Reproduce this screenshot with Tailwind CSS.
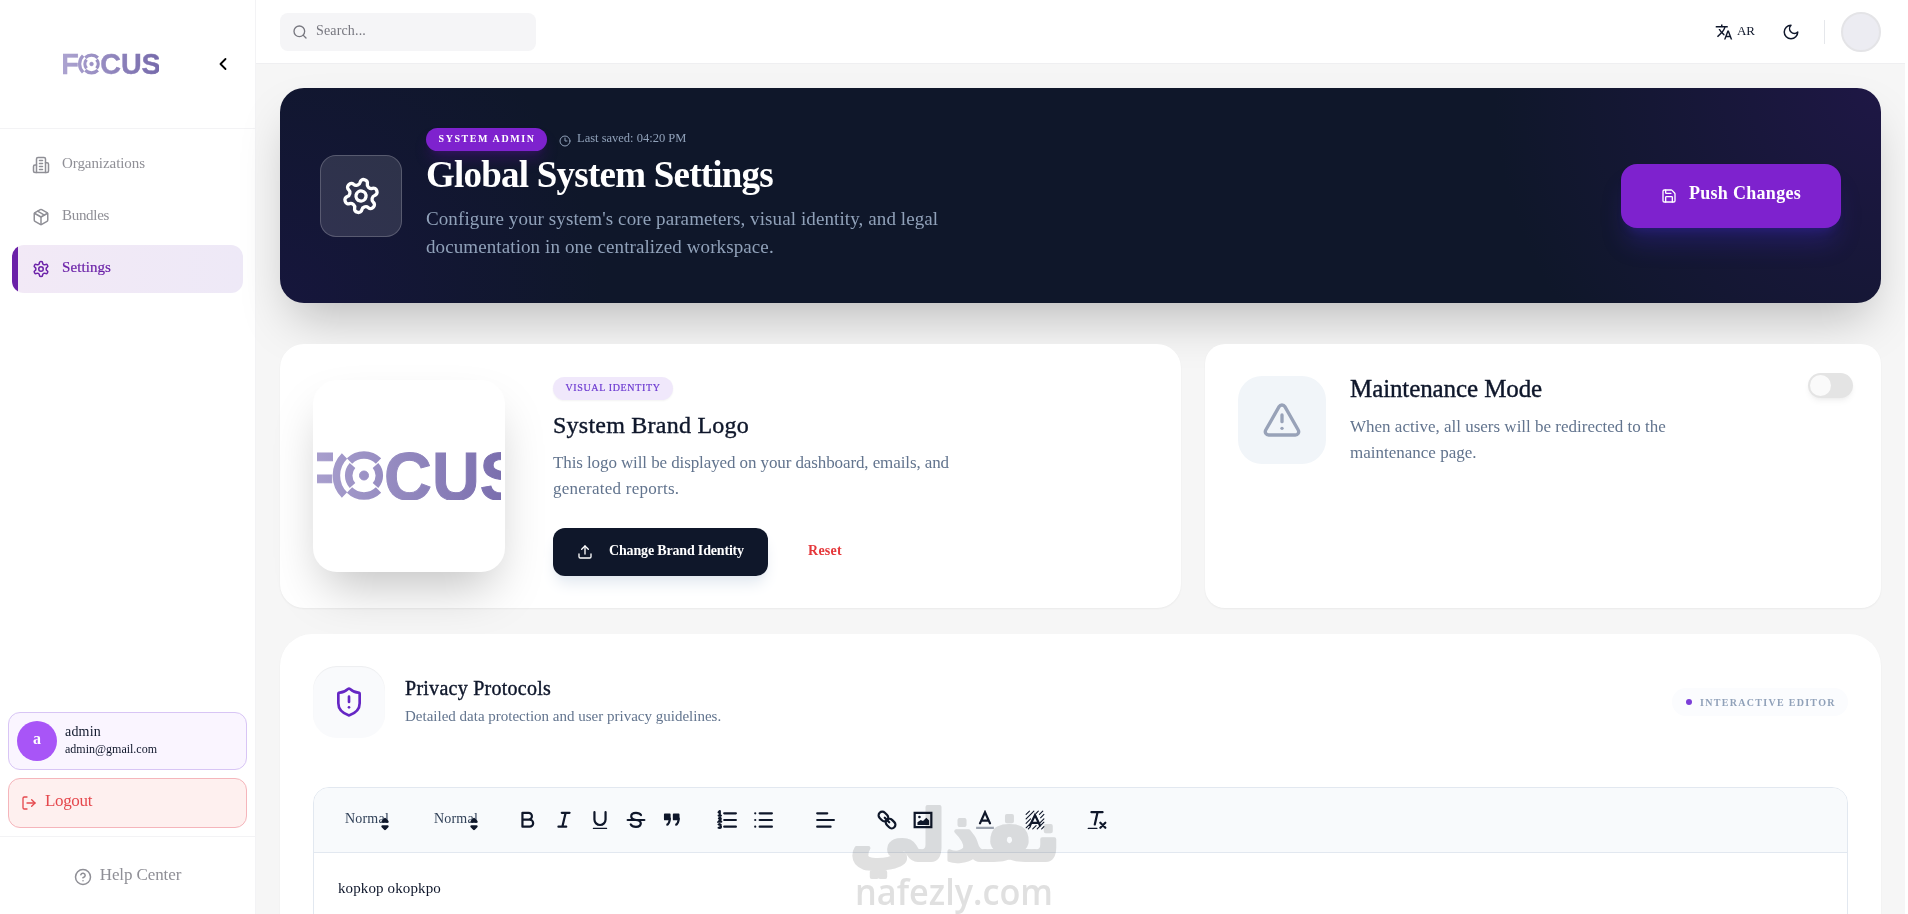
<!DOCTYPE html>
<html lang="en">
<head>
    <meta charset="UTF-8">
    <meta name="viewport" content="width=device-width, initial-scale=1.0">
    <title>Global System Settings</title>
    <script src="https://cdn.jsdelivr.net/npm/@tailwindcss/browser@4"></script>
</head>
<body class="bg-white font-['Liberation_Serif',serif] text-slate-900 h-screen overflow-hidden">
    <!-- shared logo -->
    <svg class="absolute size-0">
        <defs>
            <linearGradient id="logo-fill" gradientUnits="userSpaceOnUse" x1="0" y1="0" x2="222" y2="0">
                <stop offset="0" stop-color="#aca3d0"/>
                <stop offset="1" stop-color="#766aab"/>
            </linearGradient>
            <symbol id="logo" viewBox="0 0 222 49">
                <g fill="url(#logo-fill)" stroke="url(#logo-fill)" font-family="Liberation Sans, sans-serif" font-weight="700" font-size="68">
                    <text x="-5" y="48.5" textLength="42" lengthAdjust="spacingAndGlyphs">F</text>
                    <text x="86" y="48.5" textLength="140" lengthAdjust="spacingAndGlyphs">CUS</text>
                    <circle cx="66" cy="24.5" r="4.5"/>
                </g>
                <g fill="none" stroke="url(#logo-fill)" stroke-width="7.5">
                    <path d="M46.500 5a27.500 27.500 0 0 0 0 39"/>
                    <path d="M51.500 10a20.500 20.500 0 0 1 29 0M51.500 39a20.500 20.500 0 0 0 29 0"/>
                    <path d="M54.500 14.500a15 15 0 0 0 0 20M77.500 14.500a15 15 0 0 1 0 20"/>
                </g>
            </symbol>
        </defs>
    </svg>

    <div class="flex h-full w-[1905px] bg-[#f6f6f6]">
        <!-- Sidebar -->
        <aside class="w-64 shrink-0 bg-white border-r border-[#f3f3f5] flex flex-col">
            <div class="h-[129px] border-b border-[#f3f3f5] flex items-center justify-between pl-[63px] pr-[22px]">
                <svg class="w-[96px] h-[22px]"><use href="#logo"/></svg>
                <svg class="size-5 text-black" viewBox="0 0 24 24" fill="none" stroke="currentColor" stroke-width="2.2" stroke-linecap="round" stroke-linejoin="round"><path d="m15 18-6-6 6-6"/></svg>
            </div>
            <nav class="flex flex-col gap-1 px-3 pt-3 text-[15px] text-[#8f8f96]">
                <a href="#" class="h-12 flex items-center gap-3 pl-5">
                    <svg class="size-[18px]" viewBox="0 0 24 24" fill="none" stroke="currentColor" stroke-width="2" stroke-linecap="round" stroke-linejoin="round"><path d="M6 22V4a2 2 0 0 1 2-2h8a2 2 0 0 1 2 2v18Z"/><path d="M6 12H4a2 2 0 0 0-2 2v6a2 2 0 0 0 2 2h2"/><path d="M18 9h2a2 2 0 0 1 2 2v9a2 2 0 0 1-2 2h-2"/><path d="M10 6h4M10 10h4M10 14h4M10 18h4"/></svg>
                    <span class="pb-1 tracking-[-0.07px]">Organizations</span>
                </a>
                <a href="#" class="h-12 flex items-center gap-3 pl-5">
                    <svg class="size-[18px]" viewBox="0 0 24 24" fill="none" stroke="currentColor" stroke-width="2" stroke-linecap="round" stroke-linejoin="round"><path d="M11 21.730a2 2 0 0 0 2 0l7-4A2 2 0 0 0 21 16V8a2 2 0 0 0-1-1.730l-7-4a2 2 0 0 0-2 0l-7 4A2 2 0 0 0 3 8v8a2 2 0 0 0 1 1.730z"/><path d="M12 22V12"/><path d="m3.300 7 8.700 5 8.700-5"/><path d="m7.500 4.270 9 5.150"/></svg>
                    <span class="pb-1 tracking-[-0.3px]">Bundles</span>
                </a>
                <a href="#" class="h-12 flex items-center gap-3 rounded-xl overflow-hidden bg-linear-to-r from-[#f2e9f6] to-[#eee9f7] text-[#6b21a8]">
                    <span class="w-1.5 h-full bg-[#6b21a8] -mr-3"></span>
                    <svg class="ml-[14px] size-[18px]" viewBox="0 0 24 24" fill="none" stroke="currentColor" stroke-width="2" stroke-linecap="round" stroke-linejoin="round"><path d="M12.220 2h-.440a2 2 0 0 0-2 2v.180a2 2 0 0 1-1 1.730l-.430.250a2 2 0 0 1-2 0l-.150-.080a2 2 0 0 0-2.730.730l-.220.380a2 2 0 0 0 .730 2.730l.150.100a2 2 0 0 1 1 1.720v.510a2 2 0 0 1-1 1.740l-.150.090a2 2 0 0 0-.730 2.730l.220.380a2 2 0 0 0 2.730.730l.150-.080a2 2 0 0 1 2 0l.430.250a2 2 0 0 1 1 1.730V20a2 2 0 0 0 2 2h.440a2 2 0 0 0 2-2v-.180a2 2 0 0 1 1-1.730l.430-.250a2 2 0 0 1 2 0l.150.080a2 2 0 0 0 2.730-.730l.220-.390a2 2 0 0 0-.730-2.730l-.150-.080a2 2 0 0 1-1-1.740v-.500a2 2 0 0 1 1-1.740l.150-.090a2 2 0 0 0 .730-2.730l-.220-.380a2 2 0 0 0-2.730-.730l-.150.080a2 2 0 0 1-2 0l-.430-.250a2 2 0 0 1-1-1.730V4a2 2 0 0 0-2-2z"/><circle cx="12" cy="12" r="3"/></svg>
                    <span class="pb-1 tracking-[0.08px] [-webkit-text-stroke:0.2px]">Settings</span>
                </a>
            </nav>
            <div class="mt-auto px-2 flex flex-col gap-2">
                <div class="h-[58px] rounded-xl border border-[#d8c5f5] bg-[#faf5ff] flex items-center gap-2 pl-2">
                    <div class="size-10 rounded-full bg-[#a855f7] text-white font-bold flex items-center justify-center pb-1">a</div>
                    <div class="flex flex-col pb-0.5">
                        <span class="text-[14px] leading-[18px] tracking-[0.2px]">admin</span>
                        <span class="text-[12px] leading-[16px]">admin@gmail.com</span>
                    </div>
                </div>
                <div class="h-[50px] rounded-xl border border-[#f5b5bb] bg-[#fef0ef] text-[#e5484d] flex items-center gap-2 pl-3">
                    <svg class="size-4" viewBox="0 0 24 24" fill="none" stroke="currentColor" stroke-width="2" stroke-linecap="round" stroke-linejoin="round"><path d="M9 21H5a2 2 0 0 1-2-2V5a2 2 0 0 1 2-2h4"/><path d="m16 17 5-5-5-5"/><path d="M21 12H9"/></svg>
                    <span class="text-[17px] pb-1 tracking-[-0.35px]">Logout</span>
                </div>
            </div>
            <div class="mt-2 h-[78px] border-t border-[#f3f3f5] flex items-center justify-center gap-2 text-[#8f8f96]">
                <svg class="size-[18px] mt-0.5" viewBox="0 0 24 24" fill="none" stroke="currentColor" stroke-width="2" stroke-linecap="round" stroke-linejoin="round"><circle cx="12" cy="12" r="10"/><path d="M9.090 9a3 3 0 0 1 5.830 1c0 2-3 3-3 3"/><path d="M12 17h.010"/></svg>
                <span class="text-[17px] pb-0.5 tracking-[-0.1px]">Help Center</span>
            </div>
        </aside>

        <div class="flex-1 flex flex-col min-w-0">
            <!-- Top bar -->
            <header class="h-16 shrink-0 bg-white border-b border-[#efeff1] flex items-center justify-between px-6">
                <div class="w-64 h-[38px] rounded-lg bg-[#f5f5f7] flex items-center gap-2 pl-3 text-[#77777f]">
                    <svg class="size-4" viewBox="0 0 24 24" fill="none" stroke="currentColor" stroke-width="2" stroke-linecap="round" stroke-linejoin="round"><circle cx="11" cy="11" r="8"/><path d="m21 21-4.300-4.300"/></svg>
                    <span class="text-[14px] pb-0.5 tracking-[0.15px]">Search...</span>
                </div>
                <div class="flex items-center">
                    <svg class="size-[18px]" viewBox="0 0 24 24" fill="currentColor"><path d="m12.870 15.070-2.540-2.510.030-.030A17.520 17.520 0 0 0 14.070 6H17V4h-7V2H8v2H1v1.990h11.170C11.500 7.920 10.440 9.750 9 11.350 8.070 10.320 7.300 9.190 6.690 8h-2c.730 1.630 1.730 3.170 2.980 4.560l-5.090 5.020L4 19l5-5 3.110 3.110.760-2.040zM18.500 10h-2L12 22h2l1.120-3h4.750L21 22h2l-4.500-12zm-2.620 7 1.620-4.330L19.120 17h-3.240z"/></svg>
                    <span class="ml-1 text-[13px] pb-0.5">AR</span>
                    <svg class="ml-[27px] size-[18px]" viewBox="0 0 24 24" fill="none" stroke="currentColor" stroke-width="2" stroke-linecap="round" stroke-linejoin="round"><path d="M12 3a6 6 0 0 0 9 9 9 9 0 1 1-9-9Z"/></svg>
                    <div class="ml-6 w-px h-6 bg-gray-200"></div>
                    <div class="ml-4 size-10 rounded-full border-2 border-[#e4e4e7] bg-[#ececf2]"></div>
                </div>
            </header>

            <main class="px-6 pt-6 flex flex-col">
                <!-- Hero -->
                <section class="h-[215px] shrink-0 rounded-3xl bg-[#0f172a] bg-[radial-gradient(circle_at_100%_0%,#1e1745_0%,transparent_24%),radial-gradient(circle_at_0%_100%,#16163c_0%,transparent_20%)] shadow-2xl flex items-center px-10">
                    <div class="size-[82px] shrink-0 rounded-2xl border border-white/20 bg-white/12 flex items-center justify-center text-white">
                        <svg class="size-10 rotate-12" viewBox="0 0 24 24" fill="none" stroke="currentColor" stroke-width="2" stroke-linecap="round" stroke-linejoin="round"><path d="M12.220 2h-.440a2 2 0 0 0-2 2v.180a2 2 0 0 1-1 1.730l-.430.250a2 2 0 0 1-2 0l-.150-.080a2 2 0 0 0-2.730.730l-.220.380a2 2 0 0 0 .730 2.730l.150.100a2 2 0 0 1 1 1.720v.510a2 2 0 0 1-1 1.740l-.150.090a2 2 0 0 0-.730 2.730l.220.380a2 2 0 0 0 2.730.730l.150-.080a2 2 0 0 1 2 0l.430.250a2 2 0 0 1 1 1.730V20a2 2 0 0 0 2 2h.440a2 2 0 0 0 2-2v-.180a2 2 0 0 1 1-1.730l.430-.250a2 2 0 0 1 2 0l.150.080a2 2 0 0 0 2.730-.730l.220-.390a2 2 0 0 0-.730-2.730l-.150-.080a2 2 0 0 1-1-1.740v-.500a2 2 0 0 1 1-1.740l.150-.090a2 2 0 0 0 .730-2.730l-.220-.380a2 2 0 0 0-2.730-.730l-.150.080a2 2 0 0 1-2 0l-.430-.250a2 2 0 0 1-1-1.730V4a2 2 0 0 0-2-2z"/><circle cx="12" cy="12" r="3"/></svg>
                    </div>
                    <div class="ml-6 -mt-0.5">
                        <div class="flex items-center gap-3">
                            <span class="h-[23px] w-[121px] pl-px flex justify-center rounded-full bg-[#7e22ce] shadow-lg shadow-purple-800/30 text-white text-[10px] leading-[21px] font-bold tracking-[1.58px]">SYSTEM ADMIN</span>
                            <span class="flex items-center gap-1.5 text-[12.5px] leading-[18px] text-slate-400">
                                <svg class="size-3 mt-0.5" viewBox="0 0 24 24" fill="none" stroke="currentColor" stroke-width="2" stroke-linecap="round" stroke-linejoin="round"><circle cx="12" cy="12" r="10"/><path d="M12 6v6h4"/></svg>
                                <span class="pb-1">Last saved: 04:20 PM</span>
                            </span>
                        </div>
                        <h1 class="text-[37px] leading-[48px] font-bold tracking-[-0.77px] text-white">Global System Settings</h1>
                        <p class="mt-1.5 text-[19px] leading-7 tracking-[0.1px] text-slate-400">Configure your system's core parameters, visual identity, and legal<br>documentation in one centralized workspace.</p>
                    </div>
                    <button class="ml-auto w-[220px] h-16 rounded-2xl bg-[#7e22ce] text-white shadow-xl shadow-indigo-700/25 flex items-center justify-center gap-3">
                        <svg class="size-4" viewBox="0 0 24 24" fill="none" stroke="currentColor" stroke-width="2" stroke-linecap="round" stroke-linejoin="round"><path d="M15.200 3a2 2 0 0 1 1.400.600l3.800 3.800a2 2 0 0 1 .600 1.400V19a2 2 0 0 1-2 2H5a2 2 0 0 1-2-2V5a2 2 0 0 1 2-2z"/><path d="M17 21v-7a1 1 0 0 0-1-1H8a1 1 0 0 0-1 1v7"/><path d="M7 3v4a1 1 0 0 0 1 1h7"/></svg>
                        <span class="text-[18px] font-bold pb-1 tracking-[0.29px]">Push Changes</span>
                    </button>
                </section>

                <div class="mt-[41px] flex gap-6">
                    <!-- Brand logo -->
                    <section class="w-[901px] h-[264px] rounded-3xl bg-white shadow-xs flex items-center gap-12 px-[33px]">
                        <div class="size-48 shrink-0 rounded-3xl bg-white shadow-2xl p-1 flex items-center">
                            <div class="w-full h-[50px] overflow-hidden flex justify-center">
                                <svg class="w-[222px] h-[49px] shrink-0"><use href="#logo"/></svg>
                            </div>
                        </div>
                        <div class="h-[200px]">
                            <span class="mt-px h-[23px] w-[120px] flex justify-center rounded-full bg-[#f0e8fb] shadow-xs text-[#6d3bd1] text-[10px] leading-[21px] tracking-[0.64px] [-webkit-text-stroke:0.2px]">VISUAL IDENTITY</span>
                            <h2 class="mt-[9px] text-[24px] leading-8 tracking-[0.24px] [-webkit-text-stroke:0.4px]">System Brand Logo</h2>
                            <p class="mt-[9px] text-[17px] leading-[26px] tracking-[-0.1px] text-slate-500">This logo will be displayed on your dashboard, emails, and<br><span class="tracking-[0.25px]">generated reports.</span></p>
                            <div class="mt-[26px] flex items-center">
                                <button class="w-[215px] h-12 rounded-xl bg-[#0f172a] text-white shadow-lg shadow-slate-200 flex items-center justify-center gap-4">
                                    <svg class="size-4" viewBox="0 0 24 24" fill="none" stroke="currentColor" stroke-width="2" stroke-linecap="round" stroke-linejoin="round"><path d="M21 15v4a2 2 0 0 1-2 2H5a2 2 0 0 1-2-2v-4"/><path d="m17 8-5-5-5 5"/><path d="M12 3v12"/></svg>
                                    <span class="text-[14px] font-bold pb-1 tracking-[-0.17px]">Change Brand Identity</span>
                                </button>
                                <span class="ml-10 text-[14px] font-bold text-[#e5383b] pb-1 tracking-[0.27px]">Reset</span>
                            </div>
                        </div>
                    </section>

                    <!-- Maintenance -->
                    <section class="flex-1 h-[264px] rounded-[20px] bg-white shadow-xs flex items-start pt-8 pl-[33px] pr-7">
                        <div class="size-[88px] rounded-3xl bg-[#f1f5f9] flex items-center justify-center text-[#98a2b8]">
                            <svg class="size-10" viewBox="0 0 24 24" fill="none" stroke="currentColor" stroke-width="2" stroke-linecap="round" stroke-linejoin="round"><path d="m21.730 18-8-14a2 2 0 0 0-3.480 0l-8 14A2 2 0 0 0 4 21h16a2 2 0 0 0 1.730-3"/><path d="M12 9v4"/><path d="M12 17h.010"/></svg>
                        </div>
                        <div class="ml-6">
                            <h2 class="-mt-px text-[25px] leading-7 tracking-[-0.1px] [-webkit-text-stroke:0.4px]">Maintenance Mode</h2>
                            <p class="mt-[11px] text-[17px] leading-[26px] text-slate-500">When active, all users will be redirected to the<br>maintenance page.</p>
                        </div>
                        <div class="ml-auto -mt-[3px] w-[45px] h-[25px] rounded-full bg-[#e4e4e4] shadow-md shadow-black/5 p-[2px]">
                            <div class="size-[21px] rounded-full bg-[#fafafa]"></div>
                        </div>
                    </section>
                </div>

                <!-- Privacy -->
                <section class="mt-[26px] h-[600px] shrink-0 rounded-t-[32px] bg-white shadow-xs px-[33px] pt-8">
                    <div class="flex items-center">
                        <div class="size-[72px] rounded-3xl bg-[#f9fafc] inset-shadow-xs flex items-center justify-center text-[#6526c4]">
                            <svg class="size-8" viewBox="0 0 24 24" fill="none" stroke="currentColor" stroke-width="2" stroke-linecap="round" stroke-linejoin="round"><path d="M20 13c0 5-3.500 7.500-7.660 8.950a1 1 0 0 1-.670-.010C7.500 20.500 4 18 4 13V6a1 1 0 0 1 1-1c2 0 4.500-1.200 6.240-2.720a1.170 1.170 0 0 1 1.520 0C14.510 3.810 17 5 19 5a1 1 0 0 1 1 1z"/><path d="M12 8v4"/><path d="M12 16h.010"/></svg>
                        </div>
                        <div class="ml-5">
                            <h3 class="text-[20px] leading-7 tracking-[0.26px] [-webkit-text-stroke:0.4px]">Privacy Protocols</h3>
                            <p class="text-[15px] leading-7 text-slate-500">Detailed data protection and user privacy guidelines.</p>
                        </div>
                        <div class="ml-auto w-[176px] h-7 rounded-full bg-[#fbfcfe] flex items-center gap-2 pl-[14px]">
                            <span class="size-1.5 rounded-full bg-[#7c3fd8]"></span>
                            <span class="text-[10px] font-bold text-slate-400 tracking-[1.3px] whitespace-nowrap">INTERACTIVE EDITOR</span>
                        </div>
                    </div>
                    <div class="mt-[49px] h-[500px] rounded-t-2xl border border-slate-200 overflow-hidden">
                        <div class="h-[65px] bg-[#f8fafc] border-b border-slate-200 flex items-center pl-[31px] text-[#0f172a]">
                            <div class="w-[89px] flex items-center text-[14px]">
                                <span class="pb-1 text-slate-700 tracking-[0.2px]">Normal</span>
                                <svg class="size-[22px] -ml-[15px] mt-2 shrink-0" viewBox="0 0 18 18" fill="currentColor" stroke="currentColor" stroke-width="2" stroke-linejoin="round"><path d="m7 11 2 2 2-2zM7 7l2-2 2 2z"/></svg>
                            </div>
                            <div class="w-[84px] flex items-center text-[14px]">
                                <span class="pb-1 text-slate-700 tracking-[0.2px]">Normal</span>
                                <svg class="size-[22px] -ml-[15px] mt-2 shrink-0" viewBox="0 0 18 18" fill="currentColor" stroke="currentColor" stroke-width="2" stroke-linejoin="round"><path d="m7 11 2 2 2-2zM7 7l2-2 2 2z"/></svg>
                            </div>
                            <div class="flex gap-4 [&>svg]:size-5">
                                <svg viewBox="0 0 18 18" fill="none" stroke="currentColor" stroke-width="2" stroke-linecap="round" stroke-linejoin="round"><path d="M4 2.500h5.500A3 3 0 0 1 12.500 5.500 3 3 0 0 1 9.500 8.700H4zM4 8.700h6.500a3 3 0 0 1 0 6.300H4z"/></svg>
                                <svg viewBox="0 0 18 18" fill="none" stroke="currentColor" stroke-width="2" stroke-linecap="round"><path d="M7 2.500h7M4 15h7M7.500 15l3-12.500"/></svg>
                                <svg viewBox="0 0 18 18" fill="none" stroke="currentColor" stroke-width="2" stroke-linecap="round"><path d="M4 2v6.500a5 5 0 0 0 5 5 5 5 0 0 0 5-5V2"/><path d="M3 16.500h12" stroke-width="1"/></svg>
                                <svg viewBox="0 0 18 18" fill="none" stroke="currentColor" stroke-width="2" stroke-linecap="round"><path d="M1.500 9h15"/><path d="M13.500 4.500C12.700 3.200 11.200 2.500 9 2.500 6.500 2.500 4.700 3.700 4.700 5.600S6.500 8.600 9 9s4.300 1 4.300 3S11.500 15.200 9 15.200s-4-.800-4.700-2.200"/></svg>
                                <svg viewBox="0 0 18 18" fill="currentColor" stroke="currentColor" stroke-width="1.500" stroke-linejoin="round"><path d="M2.500 4h4.500v4.500H2.500zM10.500 4H15v4.500h-4.500z"/><path d="M7 7c0 4-1 6-3 6.500M15 7c0 4-1 6-3 6.500" fill="none" stroke-width="2"/></svg>
                            </div>
                            <div class="ml-[35px] flex gap-4 [&>svg]:size-5">
                                <svg viewBox="0 0 18 18" fill="none" stroke="currentColor" stroke-width="2" stroke-linecap="round"><path d="M6.500 3H17M6.500 9H17M6.500 15H17"/><path d="M2.500 1v4M1.500 5h2M1.500 2l1-1M1.800 7.500c1.500-1 2 .500 1 1.500L1.500 10.500h2.300M1.500 13c2-.800 2.300 1 .800 1.200 2 .300 1.500 2.300-.800 1.800" stroke-width="2"/></svg>
                                <svg viewBox="0 0 18 18" fill="none" stroke="currentColor" stroke-width="2" stroke-linecap="round"><path d="M6 3h11M6 9h11M6 15h11M2 3h.010M2 9h.010M2 15h.010"/></svg>
                            </div>
                            <svg class="ml-[42px] size-5" viewBox="0 0 18 18" fill="none" stroke="currentColor" stroke-width="2" stroke-linecap="round"><path d="M2 9h15M2 15h12M2 3h9"/></svg>
                            <div class="ml-[42px] flex gap-4 [&>svg]:size-5">
                                <svg viewBox="0 0 18 18" fill="none" stroke="currentColor" stroke-width="2" stroke-linecap="round"><path d="m7 7 4 4"/><rect x="1" y="2.600" width="9.500" height="6.600" rx="3.300" transform="rotate(45 5.800 5.900)"/><rect x="7.500" y="8.900" width="9.500" height="6.600" rx="3.300" transform="rotate(45 12.200 12.200)"/></svg>
                                <svg viewBox="0 0 18 18" fill="none" stroke="currentColor" stroke-width="2"><path d="M1.500 2.500h15v13h-15z"/><path d="M4 13.500v-2.500l3-2 2 1 3-3 2.500 2.500v4z" fill="currentColor" stroke="none"/><circle cx="5.800" cy="6.300" r="1.200" fill="currentColor" stroke="none"/></svg>
                            </div>
                            <svg class="ml-[42px] size-5" viewBox="0 0 18 18" fill="none" stroke="currentColor" stroke-width="2" stroke-linecap="round"><path d="M1 16h16" stroke="#9ca3af" stroke-linecap="butt"/><path d="M4.500 12 9 2l4.500 10M6 9.500h6"/></svg>
                            <svg class="ml-[30px] size-5" viewBox="0 0 18 18" fill="none" stroke="currentColor" stroke-linecap="round"><path d="M1 4l3-3M1 8l7-7M1 12l4-4M10 3l2-2M1 16l4-4M13 4l3-3M14 7l3-3M13 12l4-4M3 17l2-2M7 17l3-3M11 17l6-6M15 17l2-2" stroke-width="1"/><path d="M4.500 14 9 4.500l4.500 9.500M6 11.500h6" stroke-width="2"/></svg>
                            <svg class="ml-[42px] size-5" viewBox="0 0 18 18" fill="none" stroke="currentColor" stroke-width="2" stroke-linecap="round"><path d="M4 2h10M9.500 2l-2.500 11"/><path d="M1 16.500h8" stroke-width="1"/><path d="m12 11.500 4.500 4.500M16.500 11.500l-4.500 4.500"/></svg>
                        </div>
                        <p class="pl-6 pt-[23px] text-[15px] leading-6 tracking-[0.12px]">kopkop okopkpo</p>
                    </div>
                </section>
            </main>
        </div>
    </div>

    <!-- Watermark -->
    <svg class="absolute left-[840px] top-[790px] w-[230px] h-[124px] mix-blend-multiply pointer-events-none" viewBox="0 0 230 124" fill="#e0e0e0" stroke="#e0e0e0" stroke-linejoin="round">
        <text x="220" y="70" direction="rtl" font-family="DejaVu Sans, sans-serif" font-weight="700" font-size="70" stroke-width="4" textLength="210" lengthAdjust="spacingAndGlyphs">نفذلي</text>
        <text x="15" y="115" font-family="Open Sans, sans-serif" font-weight="600" font-size="36" stroke-width="0" textLength="198" lengthAdjust="spacingAndGlyphs">nafezly.com</text>
    </svg>
</body>
</html>
